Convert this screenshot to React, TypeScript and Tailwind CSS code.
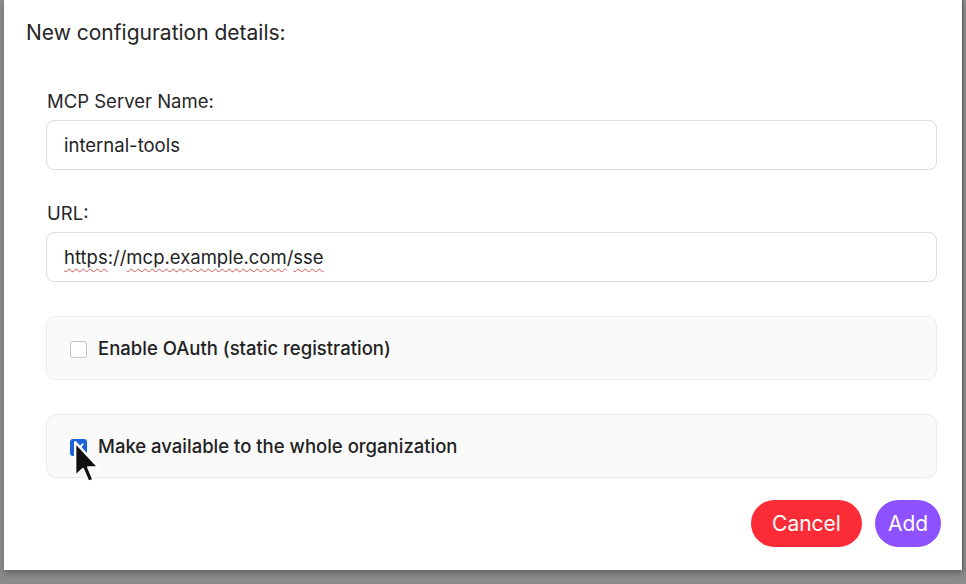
import React from "react";

function Checkbox({ checked }: { checked: boolean }) {
  if (checked) {
    return (
      <div className="flex h-[17px] w-[17px] shrink-0 items-center justify-center rounded-[3px] bg-[#1b63d8]">
        <svg width="12" height="12" viewBox="0 0 12 12" fill="none">
          <path d="M2.2 6.2 L4.8 8.8 L9.8 3.2" stroke="white" strokeWidth="1.9" strokeLinecap="round" strokeLinejoin="round" />
        </svg>
      </div>
    );
  }
  return <div className="h-[17px] w-[17px] shrink-0 rounded-[3px] border-[1.5px] border-[#c4c4c4] bg-white" />;
}

function Cursor() {
  return (
    <svg className="pointer-events-none absolute left-[73px] top-[440px]" width="30" height="47" viewBox="0 0 14 22">
      <path
        d="M1 1 L1 17 L4.6 13.6 L7.2 19.6 L9.6 18.6 L7.1 12.8 L12 12.8 Z"
        fill="#111"
        stroke="white"
        strokeWidth="1.1"
        strokeLinejoin="round"
      />
    </svg>
  );
}

function Squiggle({ children }: { children: React.ReactNode }) {
  return (
    <span className="underline decoration-wavy decoration-[#e05555] decoration-[1px] underline-offset-[4px]">{children}</span>
  );
}

export default function App() {
  return (
    <div
      className="relative h-[584px] w-[966px] overflow-hidden bg-[#8c8c8c]"
      style={{ fontFamily: "Inter, 'Noto Sans', 'Liberation Sans', sans-serif" }}
    >
      <div className="ml-[4px] flex h-[570px] w-[959px] flex-col border-r border-[#5a5a5a] bg-white pl-[22px] pr-[21px] pt-[19px] shadow-[0_4px_6px_rgba(0,0,0,0.25)]">
        <div className="text-[21px] leading-[28px] text-[#252525]">New configuration details:</div>

        <div className="mt-[42px] flex flex-col pl-[20px] pr-[4px]">
          <div className="pl-[1px] text-[18.5px] leading-[24px] text-[#262626]">MCP Server Name:</div>
          <div className="mt-[7px] flex h-[50px] items-center rounded-[8px] border-[1.5px] border-[#dcdcdc] px-[17px] pt-[2px] text-[18.5px] text-[#222]">
            internal-tools
          </div>

          <div className="mt-[31px] pl-[1px] text-[18.5px] leading-[24px] text-[#262626]">URL:</div>
          <div className="mt-[7px] flex h-[50px] items-center rounded-[8px] border-[1.5px] border-[#dcdcdc] px-[17px] pt-[2px] text-[18.5px] text-[#222]">
            <Squiggle>https</Squiggle>://<Squiggle>mcp.example.com</Squiggle>/<Squiggle>sse</Squiggle>
          </div>

          <div className="mt-[34px] flex h-[64px] items-center gap-[11px] rounded-[10px] border border-[#ebebeb] bg-[#fafafa] px-[23px] pt-[2px]">
            <Checkbox checked={false} />
            <span className="text-[18.5px] font-medium text-[#222]">Enable OAuth (static registration)</span>
          </div>

          <div className="mt-[34px] flex h-[64px] items-center gap-[11px] rounded-[10px] border border-[#ebebeb] bg-[#fafafa] px-[23px] pt-[2px]">
            <Checkbox checked={true} />
            <span className="text-[18.5px] font-medium text-[#222]">Make available to the whole organization</span>
          </div>
        </div>

        <div className="mt-[22px] flex justify-end gap-[13px]">
          <button className="h-[47px] w-[111px] rounded-full bg-red-500 text-[21px] text-white">Cancel</button>
          <button className="h-[47px] w-[66px] rounded-full bg-violet-500 text-[21px] text-white">Add</button>
        </div>
      </div>
      <Cursor />
    </div>
  );
}
